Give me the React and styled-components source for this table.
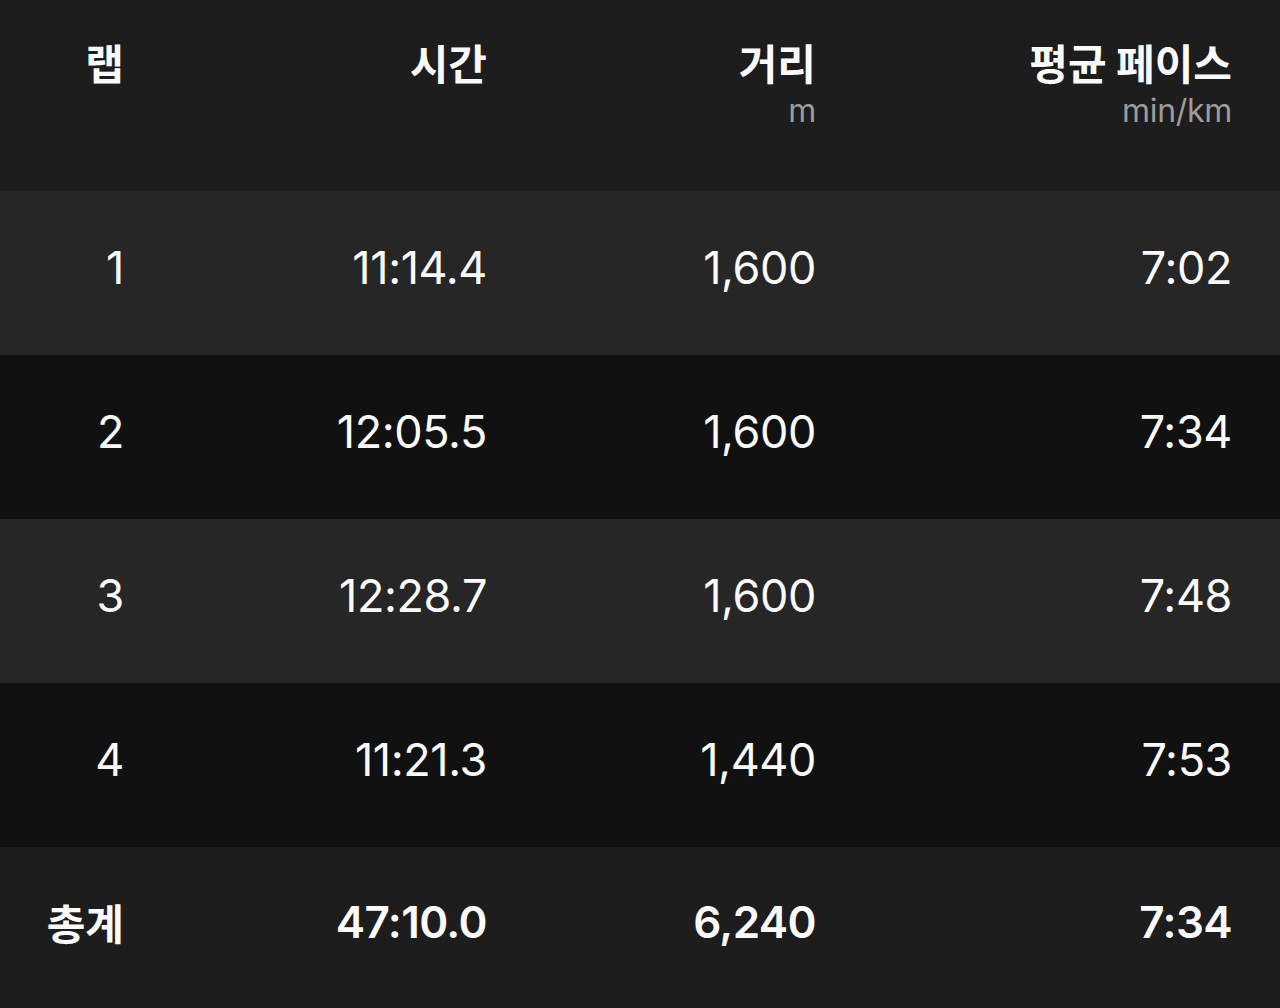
import styled, { createGlobalStyle } from "styled-components";

const GlobalStyle = createGlobalStyle`
  html, body {
    margin: 0;
    padding: 0;
    background: #1d1d1d;
  }
  body {
    font-family: Inter, "Noto Sans CJK KR", sans-serif;
    color: #fafafa;
  }
`;

const laps = [
  { lap: "1", time: "11:14.4", dist: "1,600", pace: "7:02" },
  { lap: "2", time: "12:05.5", dist: "1,600", pace: "7:34" },
  { lap: "3", time: "12:28.7", dist: "1,600", pace: "7:48" },
  { lap: "4", time: "11:21.3", dist: "1,440", pace: "7:53" },
];

const App = () => {
  return (
    <>
      <GlobalStyle />
      <Table>
        <HeaderRow>
          <HeadCell>
            <HeadTitle>랩</HeadTitle>
          </HeadCell>
          <HeadCell>
            <HeadTitle>시간</HeadTitle>
          </HeadCell>
          <HeadCell>
            <HeadTitle>거리</HeadTitle>
            <Unit>m</Unit>
          </HeadCell>
          <HeadCell>
            <HeadTitle>평균 페이스</HeadTitle>
            <Unit>min/km</Unit>
          </HeadCell>
        </HeaderRow>
        {laps.map((row, i) => (
          <Row key={row.lap} $dark={i % 2 === 1}>
            <Cell>{row.lap}</Cell>
            <Cell>{row.time}</Cell>
            <Cell>{row.dist}</Cell>
            <Cell>{row.pace}</Cell>
          </Row>
        ))}
        <TotalRow>
          <TotalCell $korean>총계</TotalCell>
          <TotalCell>47:10.0</TotalCell>
          <TotalCell>6,240</TotalCell>
          <TotalCell>7:34</TotalCell>
        </TotalRow>
      </Table>
    </>
  );
};

export default App;

const Table = styled.div`
  width: 1280px;
  height: 1008px;
  display: flex;
  flex-direction: column;
  background: #1d1d1d;
`;

const Grid = styled.div`
  display: grid;
  grid-template-columns: 124px 363px 329px 1fr;
  padding-right: 48px;
  box-sizing: border-box;
`;

const HeaderRow = styled(Grid)`
  height: 191px;
  align-items: start;
  padding-top: 38px;
`;

const HeadCell = styled.div`
  display: flex;
  flex-direction: column;
  align-items: flex-end;
`;

const HeadTitle = styled.div`
  font-family: "Noto Sans CJK KR", sans-serif;
  font-size: 42px;
  font-weight: 700;
  line-height: 48px;
  color: #fafafa;
`;

const Unit = styled.div`
  font-family: Inter, "Noto Sans", sans-serif;
  font-size: 32px;
  font-weight: 400;
  letter-spacing: -0.3px;
  line-height: 36px;
  color: #9c9c9c;
  margin-top: 7px;
`;

const Row = styled(Grid)`
  height: 164px;
  align-items: center;
  padding-bottom: 12px;
  background: ${(props) => (props.$dark ? "#111111" : "#262626")};
`;

const Cell = styled.div`
  text-align: right;
  font-size: 45px;
  font-weight: 400;
  letter-spacing: -0.4px;
  line-height: 1;
  color: #fafafa;
`;

const TotalRow = styled(Grid)`
  flex: 1;
  align-items: center;
  padding-bottom: 12px;
  background: #1d1d1d;
`;

const TotalCell = styled.div`
  text-align: right;
  font-family: ${(props) =>
    props.$korean ? `"Noto Sans CJK KR", sans-serif` : `Inter, sans-serif`};
  font-size: ${(props) => (props.$korean ? "42px" : "44px")};
  font-weight: ${(props) => (props.$korean ? 700 : 600)};
  letter-spacing: ${(props) => (props.$korean ? "0" : "-0.6px")};
  line-height: 1;
  color: #fafafa;
`;
